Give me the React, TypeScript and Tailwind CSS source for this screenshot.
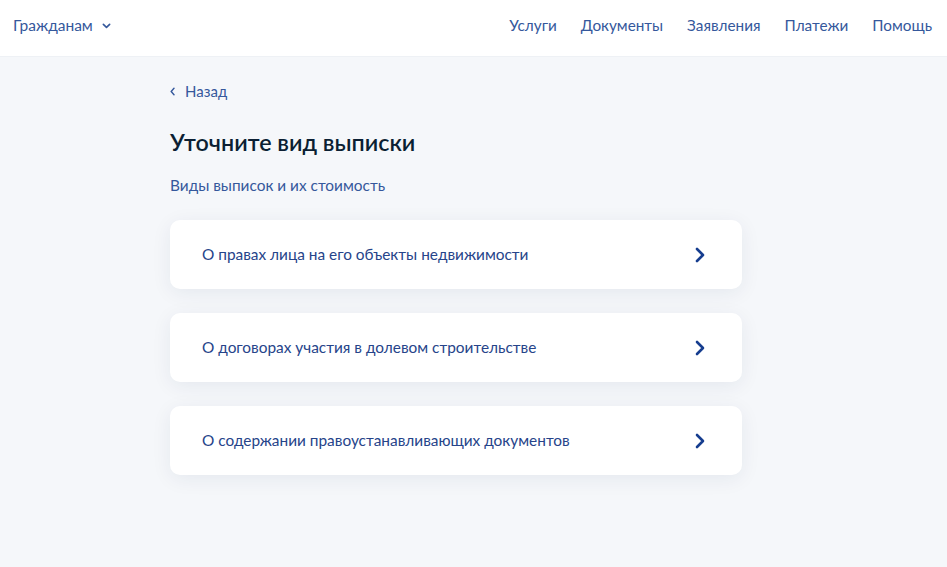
import React from "react";

const Chevron = ({ className }: { className?: string }) => (
  <svg viewBox="0 0 10 16" className={className} fill="none">
    <path d="M2 2l6 6-6 6" stroke="currentColor" strokeWidth="2.6" strokeLinecap="round" strokeLinejoin="round" />
  </svg>
);

const items = [
  "О правах лица на его объекты недвижимости",
  "О договорах участия в долевом строительстве",
  "О содержании правоустанавливающих документов",
];

export default function App() {
  return (
    <div className="min-h-[567px] bg-[#f5f7fa]" style={{ fontFamily: "Lato, 'Noto Sans', sans-serif" }}>
      <header className="h-[57px] bg-white border-b border-[#eef1f5] flex items-center justify-between pl-[13px] pr-[15px] pb-[5px]">
        <div className="flex items-center gap-[9px] text-[15.5px] text-[#35589c]">
          <span>Гражданам</span>
          <svg viewBox="0 0 10 6" className="w-[9px] h-[6px] mt-[1px]" fill="none">
            <path d="M1.5 1.2l3.5 3.4 3.5-3.4" stroke="currentColor" strokeWidth="1.8" strokeLinecap="round" strokeLinejoin="round" />
          </svg>
        </div>
        <nav className="flex items-center gap-[24px] text-[15.3px] text-[#35589c]">
          <span>Услуги</span>
          <span>Документы</span>
          <span>Заявления</span>
          <span>Платежи</span>
          <span>Помощь</span>
        </nav>
      </header>
      <main className="pl-[170px] pt-[24px]">
        <div className="w-[572px]">
          <div className="flex items-center gap-[10px] text-[15px] text-[#35589c] h-[20px]">
            <svg viewBox="0 0 6 10" className="w-[5px] h-[9px]" fill="none">
              <path d="M4.8 1.2L1.4 5l3.4 3.8" stroke="currentColor" strokeWidth="1.7" strokeLinecap="round" strokeLinejoin="round" />
            </svg>
            <span>Назад</span>
          </div>
          <h1 className="mt-[26px] text-[23.3px] leading-[30px] font-semibold text-[#0b1f33]">Уточните вид выписки</h1>
          <div className="mt-[18px] text-[15.4px] leading-[20px] text-[#35589c]">Виды выписок и их стоимость</div>
          <div className="mt-[25px] flex flex-col gap-[24px]">
            {items.map((t) => (
              <div
                key={t}
                className="h-[69px] bg-white rounded-[10px] shadow-[0_4px_20px_rgba(20,40,90,0.07)] flex items-center justify-between pl-[32px] pr-[37px]"
              >
                <span className="text-[15.4px] text-[#26448a]">{t}</span>
                <Chevron className="w-[10px] h-[16px] text-[#163d8f]" />
              </div>
            ))}
          </div>
        </div>
      </main>
    </div>
  );
}
